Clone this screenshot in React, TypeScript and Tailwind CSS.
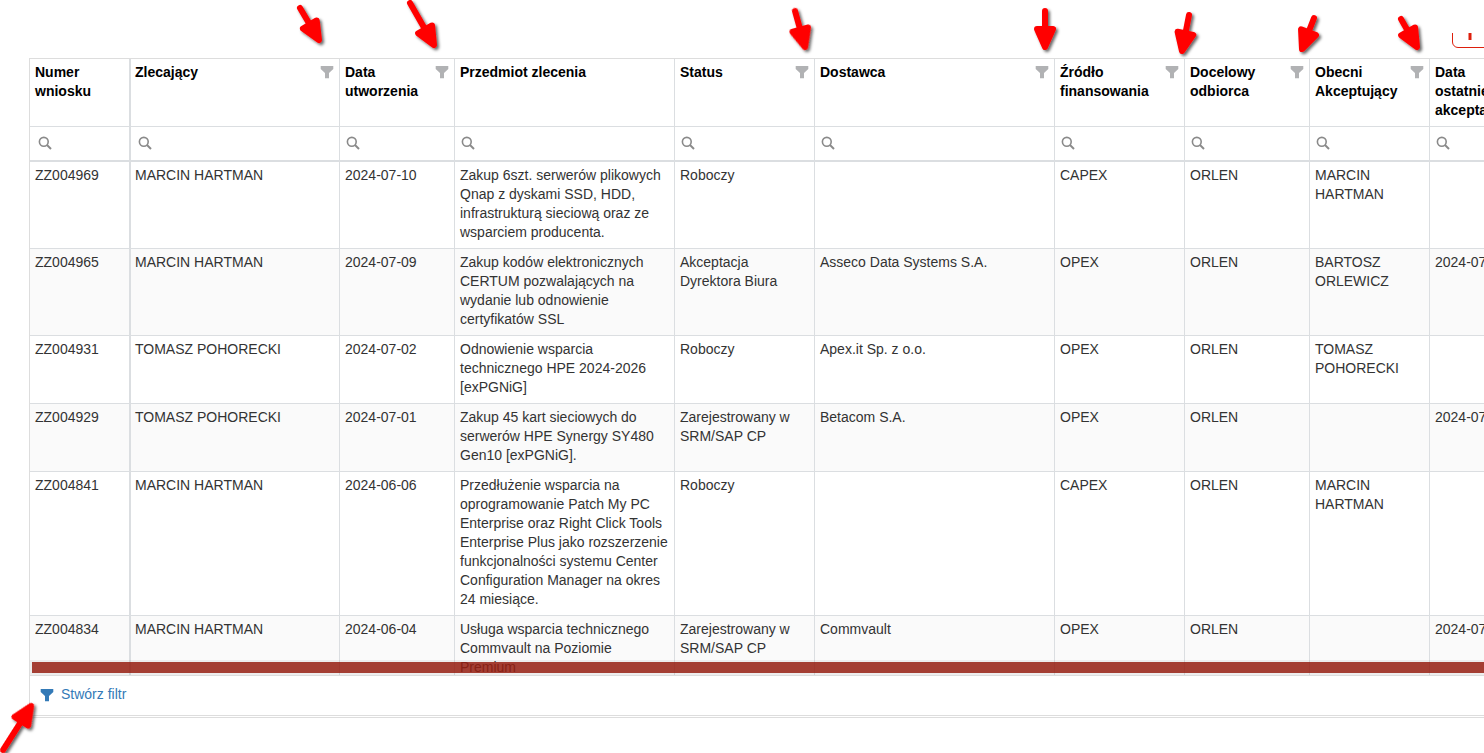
import { useState } from "react";

type Column = { key: string; title: string; width: string; filter?: boolean };

const columns: Column[] = [
  { key: "number", title: "Numer wniosku", width: "w-[100px]" },
  { key: "author", title: "Zlecający", width: "w-[210px]", filter: true },
  { key: "created", title: "Data utworzenia", width: "w-[115px]", filter: true },
  { key: "subject", title: "Przedmiot zlecenia", width: "w-[220px]" },
  { key: "status", title: "Status", width: "w-[140px]", filter: true },
  { key: "supplier", title: "Dostawca", width: "w-[240px]", filter: true },
  { key: "funding", title: "Źródło finansowania", width: "w-[130px]", filter: true },
  { key: "target", title: "Docelowy odbiorca", width: "w-[125px]", filter: true },
  { key: "approvers", title: "Obecni Akceptujący", width: "w-[120px]", filter: true },
  { key: "approved", title: "Data ostatniej akceptacji", width: "w-[90px]" },
];

const rows: string[][] = [
  ["ZZ004969", "MARCIN HARTMAN", "2024-07-10", "Zakup 6szt. serwerów plikowych Qnap z dyskami SSD, HDD, infrastrukturą sieciową oraz ze wsparciem producenta.", "Roboczy", "", "CAPEX", "ORLEN", "MARCIN HARTMAN", ""],
  ["ZZ004965", "MARCIN HARTMAN", "2024-07-09", "Zakup kodów elektronicznych CERTUM pozwalających na wydanie lub odnowienie certyfikatów SSL", "Akceptacja Dyrektora Biura", "Asseco Data Systems S.A.", "OPEX", "ORLEN", "BARTOSZ ORLEWICZ", "2024-07-09"],
  ["ZZ004931", "TOMASZ POHORECKI", "2024-07-02", "Odnowienie wsparcia technicznego HPE 2024-2026 [exPGNiG]", "Roboczy", "Apex.it Sp. z o.o.", "OPEX", "ORLEN", "TOMASZ POHORECKI", ""],
  ["ZZ004929", "TOMASZ POHORECKI", "2024-07-01", "Zakup 45 kart sieciowych do serwerów HPE Synergy SY480 Gen10 [exPGNiG].", "Zarejestrowany w SRM/SAP CP", "Betacom S.A.", "OPEX", "ORLEN", "", "2024-07-08"],
  ["ZZ004841", "MARCIN HARTMAN", "2024-06-06", "Przedłużenie wsparcia na oprogramowanie Patch My PC Enterprise oraz Right Click Tools Enterprise Plus jako rozszerzenie funkcjonalności systemu Center Configuration Manager na okres 24 miesiące.", "Roboczy", "", "CAPEX", "ORLEN", "MARCIN HARTMAN", ""],
  ["ZZ004834", "MARCIN HARTMAN", "2024-06-04", "Usługa wsparcia technicznego Commvault na Poziomie Premium", "Zarejestrowany w SRM/SAP CP", "Commvault", "OPEX", "ORLEN", "", "2024-07-01"],
];

const arrows = [
  { from: [300, 8], to: [319, 40] },
  { from: [410, 3], to: [434, 45] },
  { from: [795, 11], to: [805, 47] },
  { from: [1045, 11], to: [1045, 47] },
  { from: [1189, 15], to: [1182, 51] },
  { from: [1314, 18], to: [1302, 49] },
  { from: [1401, 19], to: [1417, 47] },
  { from: [3, 750], to: [31, 706] },
];

function columnBorder(index: number) {
  if (index === 0) return "border-r px-[5px]";
  if (index === 1) return "border-x pl-1 pr-[5px]";
  return "border-r px-[5px]";
}

function FunnelIcon() {
  return (
    <svg viewBox="0 0 14 14" className="size-3.5" fill="currentColor" aria-hidden="true">
      <path d="M.7 1h12.600v3L9 8v5.200H5V8L.7 4z" />
    </svg>
  );
}

function SearchIcon() {
  return (
    <svg viewBox="0 0 14 14" className="size-3.5 shrink-0 text-[#8a8a8a]" fill="none" stroke="currentColor" aria-hidden="true">
      <circle cx="5.8" cy="5.8" r="4.4" strokeWidth="1.6" />
      <path d="M9 9l4 4" strokeWidth="2" />
    </svg>
  );
}

function Arrow({ from, to }: { from: number[]; to: number[] }) {
  const length = Math.hypot(to[0] - from[0], to[1] - from[1]);
  const angle = (Math.atan2(to[1] - from[1], to[0] - from[0]) * 180) / Math.PI;
  return (
    <g transform={`translate(${to[0]} ${to[1]}) rotate(${angle})`}>
      <path d={`M${-length} 0H-15`} strokeWidth="6" />
      <path d="M0 0L-18 -8L-18 8Z" strokeWidth="6" />
    </g>
  );
}

export default function App() {
  const [filters, setFilters] = useState<Record<string, string>>({});

  return (
    <div className="relative min-h-screen overflow-hidden bg-white pt-[33px] font-['Liberation_Sans',Arial,sans-serif] text-sm leading-[19px] text-[#333]">
      <div className="flex h-[15px] items-end justify-end overflow-hidden">
        <button type="button" aria-label="Dodaj" className="-mr-3 flex h-9 w-11 shrink-0 items-center rounded-md border border-[#dd1f0c] pl-[7px] text-[#dd1f0c]">
          <svg viewBox="0 0 20 20" className="size-5" stroke="currentColor" strokeWidth="3" aria-hidden="true">
            <path d="M10 0v20M0 10h20" />
          </svg>
        </button>
      </div>

      <main className="mt-2.5 ml-[29px] border-y border-l border-[#ddd]">
        <div className="relative max-h-[616px] overflow-hidden">
          <table className="w-[1490px] table-fixed border-separate border-spacing-0">
            <colgroup>
              {columns.map((column) => (
                <col key={column.key} className={column.width} />
              ))}
            </colgroup>
            <thead>
              <tr>
                {columns.map((column, index) => (
                  <th key={column.key} scope="col" className={`border-b border-[#dbdee1] pt-1 pb-1.5 text-left align-top font-bold text-black ${columnBorder(index)}`}>
                    <div className="flex items-start justify-between">
                      <span>{column.title}</span>
                      {column.filter && (
                        <button type="button" aria-label={`Filtruj: ${column.title}`} className="mt-0.5 shrink-0 text-[#b1b2b4]">
                          <FunnelIcon />
                        </button>
                      )}
                    </div>
                  </th>
                ))}
              </tr>
              <tr>
                {columns.map((column, index) => (
                  <td key={column.key} className={`border-b-2 border-[#dbdee1] ${columnBorder(index)}`}>
                    <label className={`flex h-[33px] items-center gap-1 pb-0.5 ${index < 2 ? "pl-[3px]" : "pl-px"}`}>
                      <SearchIcon />
                      <input
                        type="text"
                        aria-label={`Szukaj: ${column.title}`}
                        value={filters[column.key] ?? ""}
                        onChange={(event) => setFilters({ ...filters, [column.key]: event.target.value })}
                        className="w-full min-w-0 bg-transparent outline-none"
                      />
                    </label>
                  </td>
                ))}
              </tr>
            </thead>
            <tbody>
              {rows.map((row) => (
                <tr key={row[0]} className="even:bg-[#fafafa]">
                  {row.map((value, index) => (
                    <td key={columns[index].key} className={`border-b border-[#dbdee1] pt-1 pb-1.5 align-top ${columnBorder(index)} ${index === 9 ? "whitespace-nowrap" : "whitespace-normal"}`}>
                      {value}
                    </td>
                  ))}
                </tr>
              ))}
            </tbody>
          </table>
          <div className="absolute inset-x-0 bottom-0 bg-black/5 py-0.5 pl-0.5">
            <div className="h-[11px] bg-[#961f12]/85" />
          </div>
        </div>
        <div className="flex h-[41px] items-center border-y border-[#ddd] px-2.5 pb-0.5">
          <button type="button" className="flex items-end gap-[7px] text-[#337ab7]">
            <span className="pb-0.5">
              <FunnelIcon />
            </span>
            <span>Stwórz filtr</span>
          </button>
        </div>
        <div className="h-px" />
      </main>

      <svg className="pointer-events-none absolute top-0 left-0 h-[753px] w-[1484px]" fill="#f00" stroke="#f00" strokeLinecap="round" strokeLinejoin="round" aria-hidden="true">
        <defs>
          <filter id="arrow-shadow" x="-5%" y="-5%" width="110%" height="110%">
            <feDropShadow dx="2" dy="2" stdDeviation="1.5" floodColor="#000" floodOpacity="0.6" />
          </filter>
        </defs>
        <g filter="url(#arrow-shadow)">
          {arrows.map((arrow) => (
            <Arrow key={arrow.from.join("-")} from={arrow.from} to={arrow.to} />
          ))}
        </g>
      </svg>
    </div>
  );
}
